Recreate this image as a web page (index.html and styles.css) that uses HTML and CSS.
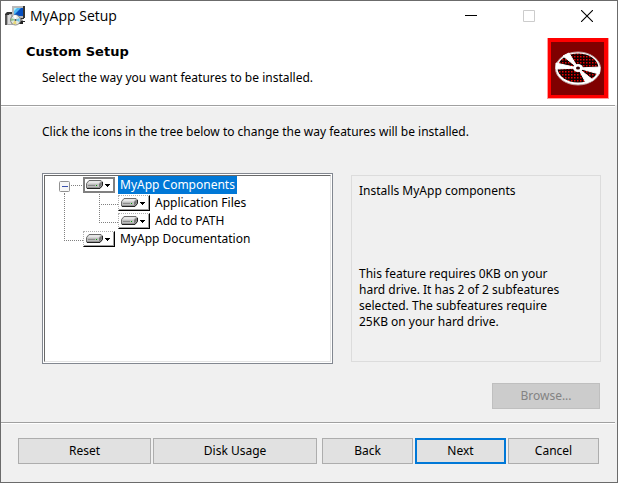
FILE: index.html
```html
<!DOCTYPE html>
<html lang="en">
<head>
<meta charset="utf-8">
<title>MyApp Setup</title>
<link rel="stylesheet" href="styles.css">
</head>
<body>
<svg width="0" height="0" class="defs" aria-hidden="true">
  <defs>
    <pattern id="mesh" width="3" height="3" patternUnits="userSpaceOnUse">
      <rect width="3" height="3" fill="#140000"/><rect width="1.500" height="1.500" fill="#e80000"/>
    </pattern>
    <symbol id="drive" viewBox="0 0 28 12">
      <path d="M4 1.500h12l1 1v4l-2 2.500H1.500V4.500z" fill="#c4c4c4" stroke="#6a6a6a"/>
      <path d="M4.500 2h11l-2 2.500H2.500z" fill="#e6e6e6"/>
      <path d="M2 5h11v3H2z" fill="#bdbdbd"/>
      <path d="M3 6.500h7" stroke="#8a8a8a"/><path d="M11 6.500h1" stroke="#00a000"/>
      <path d="M14 5l2.500-2.500v4L14 8.500z" fill="#777"/>
      <path d="M2 9.500h13l2.500-3V3" fill="none" stroke="#222"/>
      <path d="M20 5h5v1h-1v1h-1v1h-1v-1h-1v-1h-1z" fill="#000"/>
    </symbol>
  </defs>
</svg>
<main class="window">
  <header class="titlebar">
    <svg class="app-icon" width="20" height="20" viewBox="0 0 20 20" aria-hidden="true">
      <path d="M0 9l2-1v11H0z" fill="#555"/>
      <path d="M2 6h6v13H2z" fill="#aaa"/>
      <path d="M0 8l2-2h5v2H4v1H0z" fill="#333"/>
      <path d="M3 9h3v9H3z" fill="#ddd"/>
      <path d="M7 0h11v12H7z" fill="#b9b9b9"/>
      <path d="M18 0h2v12h-2zM8 12h11v1H8z" fill="#333"/>
      <path d="M9 2h9v8H9z" fill="#064fc0"/>
      <path d="M9 2h7l-7 7z" fill="#4fb8f4"/>
      <path d="M9 2h3l-3 3z" fill="#a8efff"/>
      <path d="M11 13h6l2 3H9z" fill="#888"/>
      <path d="M15 15h5v1h-2v2h-4z" fill="#222"/>
      <circle cx="10.500" cy="14" r="5" fill="#dfe6df" stroke="#888"/>
      <path d="M10.500 14L8 9.500a5 5 0 0 1 4 0z" fill="#fff"/>
      <path d="M10.500 14l4-2v4z" fill="#6cc5e9"/>
      <path d="M10.500 14l1 4.500-4-1z" fill="#e8d774"/>
      <path d="M10.500 14l-4.500 1v-3z" fill="#8dc58d"/>
      <circle cx="10.500" cy="14" r="1" fill="#555"/>
    </svg>
    <h1>MyApp Setup</h1>
    <div class="caption">
      <button type="button" aria-label="Minimize"><svg width="12" height="12" viewBox="0 0 12 12"><path d="M0 5.500h12" stroke="#000"/></svg></button>
      <button type="button" aria-label="Maximize" disabled><svg width="12" height="12" viewBox="0 0 12 12"><path d="M.5.5h11v11H.5z" fill="none" stroke="#ccc"/></svg></button>
      <button type="button" aria-label="Close"><svg width="12" height="12" viewBox="0 0 12 12"><path d="M0 0l12 12M12 0L0 12" stroke="#000" stroke-width="1.100"/></svg></button>
    </div>
  </header>
  <section class="banner">
    <div class="heading">
      <h2>Custom Setup</h2>
      <p>Select the way you want features to be installed.</p>
    </div>
    <svg class="disc" width="62" height="61" viewBox="0 0 62 61" aria-hidden="true">
      <rect width="62" height="61" fill="#ff9c9c"/>
      <rect x="1" width="60" height="60" fill="#f00"/>
      <rect x="4" y="4" width="53" height="53" fill="#800000"/>
      <ellipse cx="31" cy="30.500" rx="22.500" ry="16.500" fill="#fff" stroke="#b99" stroke-width="1"/>
      <ellipse cx="31" cy="30" rx="20.500" ry="14.500" fill="url(#mesh)"/>
      <path d="M31 30L9 25v6z M31 30L16 18l6-3z M31 30l22-1-1 7z M31 30l8 15 7-3z" fill="#fff" stroke="#fff" stroke-width="1"/>
      <ellipse cx="31" cy="30" rx="5" ry="4" fill="#fff"/>
      <ellipse cx="31" cy="30" rx="2" ry="1.500" fill="#300"/>
    </svg>
  </section>
  <section class="content">
    <p class="intro">Click the icons in the tree below to change the way features will be installed.</p>
    <div class="columns">
      <div class="tree-frame">
        <ul class="tree">
          <li class="row">
            <svg width="39" height="18" viewBox="0 0 39 18" aria-hidden="true">
              <path d="M27 9.500h12M20.500 15v3" class="dots"/>
              <rect x="15.500" y="5.500" width="10" height="10" rx="1" fill="#f7f7f7" stroke="#919191"/>
              <path d="M18 10.500h6" stroke="#3b52ad"/>
            </svg>
            <button type="button" class="state current" aria-label="MyApp Components state"><svg width="28" height="12"><use href="#drive"/></svg></button>
            <span class="label selected">MyApp Components</span>
          </li>
          <li class="row">
            <svg width="74" height="18" viewBox="0 0 74 18" aria-hidden="true"><path d="M20.500 0v18M55.500 0v18M57 10.500h17" class="dots"/></svg>
            <button type="button" class="state" aria-label="Application Files state"><svg width="28" height="12"><use href="#drive"/></svg></button>
            <span class="label">Application Files</span>
          </li>
          <li class="row">
            <svg width="74" height="18" viewBox="0 0 74 18" aria-hidden="true"><path d="M20.500 0v18M55.500 0v10M55 10.500h19" class="dots"/></svg>
            <button type="button" class="state" aria-label="Add to PATH state"><svg width="28" height="12"><use href="#drive"/></svg></button>
            <span class="label">Add to PATH</span>
          </li>
          <li class="row">
            <svg width="39" height="18" viewBox="0 0 39 18" aria-hidden="true"><path d="M20.500 0v10M20 10.500h19" class="dots"/></svg>
            <button type="button" class="state" aria-label="MyApp Documentation state"><svg width="28" height="12"><use href="#drive"/></svg></button>
            <span class="label">MyApp Documentation</span>
          </li>
        </ul>
      </div>
      <aside class="details">
        <p class="about">Installs MyApp components</p>
        <p>This feature requires 0KB on your hard drive. It has 2 of 2 subfeatures selected. The subfeatures require 25KB on your hard drive.</p>
      </aside>
    </div>
    <div class="browse"><button type="button" class="btn" disabled>Browse...</button></div>
  </section>
  <footer class="actions">
    <button type="button" class="btn reset">Reset</button>
    <button type="button" class="btn usage">Disk Usage</button>
    <button type="button" class="btn back">Back</button>
    <button type="button" class="btn primary">Next</button>
    <button type="button" class="btn">Cancel</button>
  </footer>
</main>
</body>
</html>
```
FILE: styles.css
```css
* { box-sizing: border-box; }
body {
  margin: 0;
  font: 12px/16px "Noto Sans", sans-serif;
  color: #000;
  background: #f0f0f0;
}
h1, h2, p, ul { margin: 0; padding: 0; font: inherit; }
button { font: inherit; color: inherit; margin: 0; padding: 0; }
svg { display: block; }
.defs { position: absolute; }

.window {
  display: flex;
  flex-direction: column;
  min-height: 100vh;
  border: 1px solid #6b6b6b;
  background: #f0f0f0;
}

.titlebar {
  display: flex;
  align-items: center;
  height: 30px;
  padding: 0 1px 0 4px;
  background: #fff;
}
.titlebar h1 {
  flex: 1;
  padding-left: 5px;
  font: 14px/20px "Open Sans", "Noto Sans", sans-serif;
}
.caption { display: flex; height: 30px; }
.caption button {
  display: grid;
  place-items: center;
  width: 58px;
  border: 0;
  background: transparent;
}

.banner {
  display: flex;
  justify-content: space-between;
  height: 74px;
  padding: 7px 8px 0 25px;
  background: #fff;
}
.heading { padding-top: 6px; }
.banner h2 {
  margin-bottom: 10px;
  font: bold 13px/16px "DejaVu Sans", sans-serif;
}
.banner p { padding-left: 16px; }

.content {
  flex: 1;
  padding: 18px 14px 12px 41px;
  border-top: 1px solid #a0a0a0;
  box-shadow: inset 0 1px #fff;
  margin-right: 2px;
}
.intro { margin-bottom: 33px; }
.columns {
  display: grid;
  grid-template-columns: 291fr 250fr;
  gap: 18px;
}
.tree-frame {
  height: 191px;
  border: 1px solid #828790;
  padding: 1px;
  background: #fff;
}
.tree {
  height: 100%;
  border: 1px solid #e3e3e3;
  border-top-color: #696969;
  border-left-color: #696969;
  list-style: none;
}
.row { display: flex; height: 18px; align-items: center; }
.row > svg { flex: none; margin-left: -1px; }
.dots { fill: none; stroke: #808080; stroke-dasharray: 1 1; }
.state {
  flex: none;
  width: 32px;
  height: 16px;
  border: 1px solid #000;
  border-top: 1px dotted #b0b0b0;
  border-left: 1px dotted #b0b0b0;
  box-shadow: inset -1px -1px #a0a0a0;
  background: #fff;
  padding-left: 1px;
}
.state.current { border: 2px solid #808080; padding: 0; box-shadow: none; }
.label { height: 18px; line-height: 18px; margin-left: 3px; padding: 0 2px; }
.label.selected { background: #0078d7; color: #fff; }

.details {
  height: 187px;
  margin-top: 2px;
  padding: 7px 30px 0 7px;
  border: 1px solid #dcdcdc;
}
.about { height: 83px; }

.browse { display: flex; justify-content: flex-end; margin-top: 19px; }
.btn {
  width: 91px;
  height: 26px;
  border: 1px solid #adadad;
  background: #e1e1e1;
}
.browse .btn { width: 108px; margin-right: 1px; }
.btn:disabled { border-color: #bfbfbf; background: #ccc; color: #838383; }
.btn.primary { border: 2px solid #0078d7; }

.actions {
  display: flex;
  gap: 2px;
  margin-right: 2px;
  padding: 15px 16px 18px 17px;
  border-top: 1px solid #a0a0a0;
  box-shadow: inset 0 1px #fff;
}
.btn.reset { flex: 133; }
.btn.usage { flex: 164; }
.btn.back { margin-left: 3px; }
```
